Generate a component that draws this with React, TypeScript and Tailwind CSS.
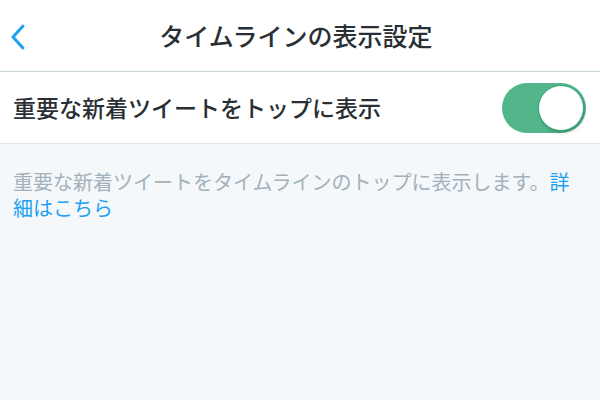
import React from "react";

export default function App() {
  return (
    <div
      className="w-[600px] h-[400px] bg-[#f5f8fa] flex flex-col overflow-hidden"
      style={{ fontFamily: '"Noto Sans CJK JP", "Noto Sans", sans-serif' }}
    >
      {/* Header */}
      <div className="h-[72px] bg-white border-b border-[#c9d5dd] flex items-center relative">
        <button className="absolute left-[8px] top-[22px] w-[20px] h-[30px] flex items-center justify-center">
          <svg width="18" height="28" viewBox="0 0 18 28" fill="none">
            <path d="M14 3 L4 14 L14 25" stroke="#1da1f2" strokeWidth="3" strokeLinecap="round" strokeLinejoin="round" />
          </svg>
        </button>
        <h1 className="flex-1 text-center pr-[8px] text-[25px] font-medium text-[#292f33]">
          タイムラインの表示設定
        </h1>
      </div>

      {/* Toggle row */}
      <div className="h-[72px] bg-white border-b border-[#e1e8ed] flex items-center justify-between pl-[13px] pr-[14px]">
        <span className="text-[23px] font-medium text-[#292f33]">重要な新着ツイートをトップに表示</span>
        <div className="w-[84px] h-[50px] rounded-full bg-[#52b68a] relative">
          <div className="absolute right-[2px] top-[2px] w-[46px] h-[46px] rounded-full bg-white border-[1.5px] border-[#2fa878] shadow-[1px_2px_3px_rgba(0,0,0,0.2)]" />
        </div>
      </div>

      {/* Description */}
      <p className="pl-[13px] pr-[24px] pt-[25px] text-[20px] leading-[26px] text-[#a3b1ba]">
        重要な新着ツイートをタイムラインのトップに表示します。<span className="text-[#1da1f2]">詳細はこちら</span>
      </p>
    </div>
  );
}
